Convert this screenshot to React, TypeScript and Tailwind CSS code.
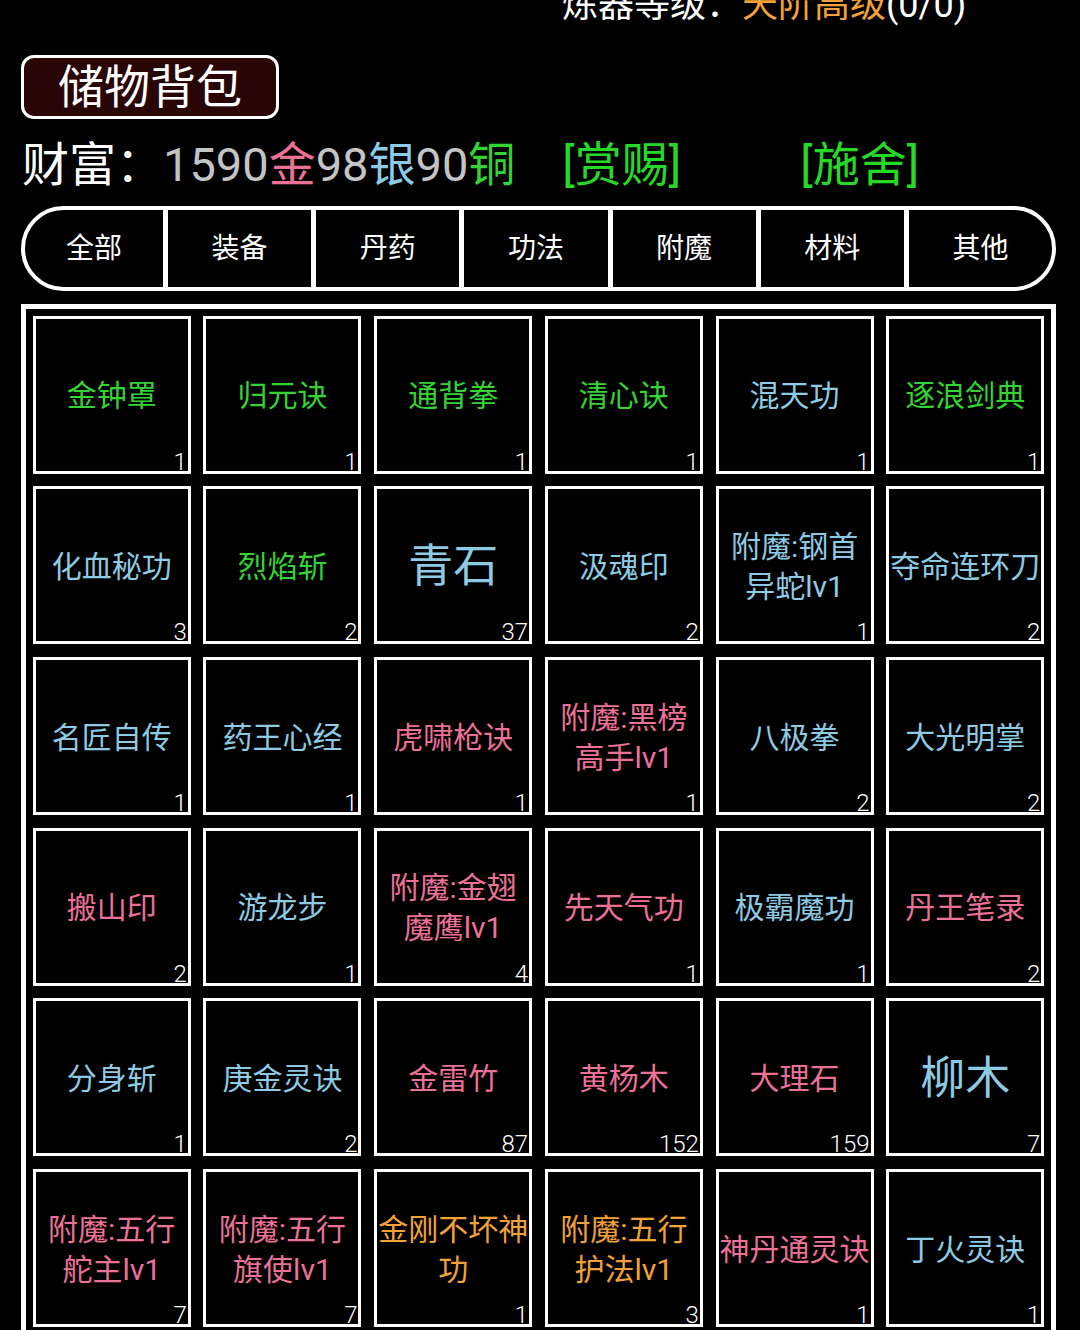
import React from "react";

const G = "text-[#33d433]";
const B = "text-[#8dcae3]";
const P = "text-[#ec7197]";
const O = "text-[#f2a236]";

type Item = { name: string; color: string; count: number; big?: boolean };

const items: Item[] = [
  { name: "金钟罩", color: G, count: 1 },
  { name: "归元诀", color: G, count: 1 },
  { name: "通背拳", color: G, count: 1 },
  { name: "清心诀", color: G, count: 1 },
  { name: "混天功", color: B, count: 1 },
  { name: "逐浪剑典", color: G, count: 1 },
  { name: "化血秘功", color: B, count: 3 },
  { name: "烈焰斩", color: G, count: 2 },
  { name: "青石", color: B, count: 37, big: true },
  { name: "汲魂印", color: B, count: 2 },
  { name: "附魔:钢首|异蛇lv1", color: B, count: 1 },
  { name: "夺命连环刀", color: B, count: 2 },
  { name: "名匠自传", color: B, count: 1 },
  { name: "药王心经", color: B, count: 1 },
  { name: "虎啸枪诀", color: P, count: 1 },
  { name: "附魔:黑榜|高手lv1", color: P, count: 1 },
  { name: "八极拳", color: B, count: 2 },
  { name: "大光明掌", color: B, count: 2 },
  { name: "搬山印", color: P, count: 2 },
  { name: "游龙步", color: B, count: 1 },
  { name: "附魔:金翅|魔鹰lv1", color: P, count: 4 },
  { name: "先天气功", color: P, count: 1 },
  { name: "极霸魔功", color: B, count: 1 },
  { name: "丹王笔录", color: P, count: 2 },
  { name: "分身斩", color: B, count: 1 },
  { name: "庚金灵诀", color: B, count: 2 },
  { name: "金雷竹", color: P, count: 87 },
  { name: "黄杨木", color: P, count: 152 },
  { name: "大理石", color: P, count: 159 },
  { name: "柳木", color: B, count: 7, big: true },
  { name: "附魔:五行|舵主lv1", color: P, count: 7 },
  { name: "附魔:五行|旗使lv1", color: P, count: 7 },
  { name: "金刚不坏神|功", color: O, count: 1 },
  { name: "附魔:五行|护法lv1", color: O, count: 3 },
  { name: "神丹通灵诀", color: P, count: 1 },
  { name: "丁火灵诀", color: B, count: 1 },
];

const tabs = ["全部", "装备", "丹药", "功法", "附魔", "材料", "其他"];

export default function App() {
  return (
    <div className="min-h-[1330px] bg-black text-white font-[Roboto,'Noto_Sans_CJK_SC',sans-serif] overflow-hidden">
      {/* top heading (cut off by the top edge, as in the screenshot) */}
      <div className="flex h-[55px] items-start">
        <div className="-mt-[13px] pl-[562px] text-[36px] leading-none whitespace-nowrap">
          <span className="text-white">炼器等级：</span>
          <span className="text-[#f2a236]">天阶高级</span>
          <span className="text-white">(0/0)</span>
        </div>
      </div>

      {/* title button */}
      <div className="pl-[21px]">
        <div className="flex h-[64px] w-[258px] items-center justify-center rounded-[13px] border-[3px] border-white bg-[#2a0505] text-[46px] leading-none text-white">
          储物背包
        </div>
      </div>

      {/* wealth line */}
      <div className="flex h-[87px] items-center pl-[22px] pt-[4px] text-[47px] leading-none whitespace-nowrap">
        <span className="text-white">财富：</span>
        <span className="text-[#c4c4c4]">1590</span>
        <span className={P}>金</span>
        <span className="text-[#c4c4c4]">98</span>
        <span className={B}>银</span>
        <span className="text-[#c4c4c4]">90</span>
        <span className={G}>铜</span>
        <span className="ml-[47px] text-[#26d926]">[赏赐]</span>
        <span className="ml-[119px] text-[#26d926]">[施舍]</span>
      </div>

      {/* tab bar */}
      <div className="pl-[21px] pr-[24px]">
        <div className="flex h-[85px] overflow-hidden rounded-full border-[4px] border-white">
          {tabs.map((t, i) => (
            <div
              key={t}
              className={
                "flex items-center justify-center text-[28px] leading-none text-white" +
                (i > 0 ? " flex-1 border-l-[5px] border-white" : " w-[138px] shrink-0")
              }
            >
              {t}
            </div>
          ))}
        </div>
      </div>

      {/* item grid */}
      <div className="mt-[13px] pl-[21px] pr-[24px]">
        <div className="border-[5px] border-white px-[6.75px] pt-[6.7px] pb-[40px]">
          <div className="grid grid-cols-6 gap-[12.7px]">
            {items.map((it, idx) => (
              <div
                key={idx}
                className="relative flex h-[158px] items-center justify-center border-[3px] border-white bg-black pt-[3px]"
              >
                <div
                  className={
                    "flex flex-col items-center text-center whitespace-nowrap " +
                    it.color +
                    (it.big ? " text-[45px] leading-none" : " text-[30px] leading-[40px]")
                  }
                >
                  {it.name.split("|").map((line, li) => (
                    <span key={li}>{line}</span>
                  ))}
                </div>
                <span className="absolute bottom-[-3px] right-[1px] text-[24px] font-light leading-none text-white">
                  {it.count}
                </span>
              </div>
            ))}
          </div>
        </div>
      </div>
    </div>
  );
}
